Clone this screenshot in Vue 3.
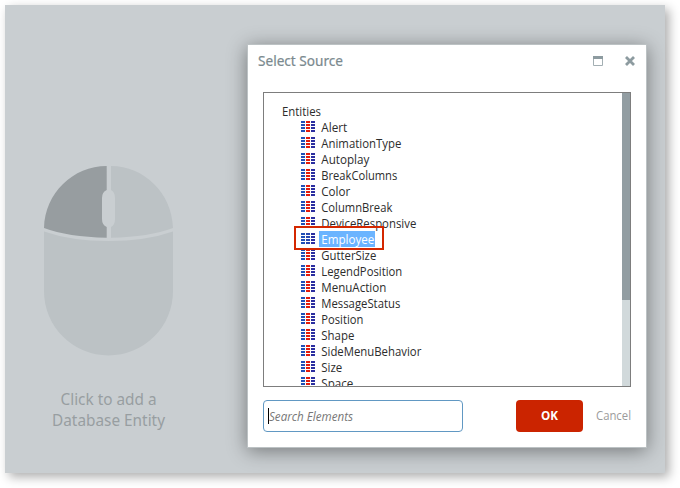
<script setup>
const entities = [
  { name: 'Alert', width: 26 },
  { name: 'AnimationType', width: 80 },
  { name: 'Autoplay', width: 48 },
  { name: 'BreakColumns', width: 76 },
  { name: 'Color', width: 29 },
  { name: 'ColumnBreak', width: 71 },
  { name: 'DeviceResponsive', width: 95 },
  { name: 'Employee', width: 53, selected: true },
  { name: 'GutterSize', width: 55 },
  { name: 'LegendPosition', width: 81 },
  { name: 'MenuAction', width: 65 },
  { name: 'MessageStatus', width: 79 },
  { name: 'Position', width: 42 },
  { name: 'Shape', width: 33 },
  { name: 'SideMenuBehavior', width: 100 },
  { name: 'Size', width: 21 },
  { name: 'Space', width: 32 },
]
</script>

<template>
  <div class="page">
    <main class="canvas">
      <section class="hint">
        <svg class="mouse" width="130" height="190" viewBox="0 0 130 190">
          <path fill="#979da0" d="M0 62C1 27 29 0 62.7 0V24Q58 26 58 32V53Q58 59 62.7 61V71.700Q24 71 0 62Z" />
          <path fill="#bcc2c5" d="M129 62C128 27 100 0 67 0V24Q71 26 71 32V53Q71 59 67 61V71.700Q105 71 129 62Z" />
          <path fill="#bcc2c5" d="M0 65.500Q27 75 64.500 75T129 65.500V125A64.500 64.500 0 0 1 0 125Z" />
        </svg>
        <p class="caption">
          <svg width="126" height="48">
            <text x="16.500" y="16" textLength="96" lengthAdjust="spacingAndGlyphs">Click to add a</text>
            <text x="8" y="37" textLength="113" lengthAdjust="spacingAndGlyphs">Database Entity</text>
          </svg>
        </p>
      </section>
      <section class="dialog">
        <header class="header">
          <svg class="title" width="100" height="22"><text x="0" y="15" textLength="85" lengthAdjust="spacingAndGlyphs">Select Source</text></svg>
          <svg class="tools" width="44" height="12" viewBox="0 0 44 12">
            <path fill="none" stroke="#a3afb3" d="M.5 1v9.500h9V1" />
            <path fill="#8d9ba0" d="M0 1h10v3H0z" />
            <path fill="none" stroke="#8d9ba0" stroke-width="2.800" d="M33 2l8 8M41 2l-8 8" />
          </svg>
        </header>
        <div class="tree">
          <div class="list">
            <div class="root"><svg width="60" height="16"><text x="0" y="13" textLength="39" lengthAdjust="spacingAndGlyphs">Entities</text></svg></div>
            <div v-for="e in entities" :key="e.name" class="row">
              <svg class="grid" width="14" height="11" viewBox="0 0 14 11" shape-rendering="crispEdges">
                <g v-for="n in 4" :key="n">
                  <rect x="0" :y="(n - 1) * 3" width="4" height="2" fill="#2050b8" />
                  <rect x="5" :y="(n - 1) * 3" width="4" height="2" :fill="e.selected ? '#2848b0' : '#e21c0c'" />
                  <rect x="10" :y="(n - 1) * 3" width="4" height="2" fill="#2b2ea0" />
                </g>
              </svg>
              <svg class="name" :class="{ selected: e.selected }" :width="e.width + 3" height="16">
                <text x="2.300" y="13" :textLength="e.width" lengthAdjust="spacingAndGlyphs">{{ e.name }}</text>
              </svg>
              <span v-if="e.selected" class="marker"></span>
            </div>
          </div>
          <div class="track"><div class="thumb"></div></div>
        </div>
        <footer class="footer">
          <div class="search">
            <span class="caret"></span>
            <svg width="100" height="20"><text x="0" y="15" textLength="84" lengthAdjust="spacingAndGlyphs">Search Elements</text></svg>
          </div>
          <button class="ok"><svg width="17" height="16"><text x="0" y="12" textLength="17" lengthAdjust="spacingAndGlyphs">OK</text></svg></button>
          <svg class="cancel" width="35" height="18"><text x="0" y="13" textLength="35" lengthAdjust="spacingAndGlyphs">Cancel</text></svg>
        </footer>
      </section>
    </main>
  </div>
</template>

<style>
body { background: #fff; }
</style>

<style scoped>
* { box-sizing: border-box; }
svg { display: block; flex: none; overflow: visible; }
.page { width: 680px; height: 488px; padding: 5px; overflow: hidden; }
.canvas {
  width: 660px; height: 468px; display: flex; align-items: flex-start;
  background: #c9ced1; box-shadow: 4px 4px 10px rgba(0, 0, 0, .32);
  font-family: "Open Sans", "Noto Sans", sans-serif; font-size: 12px;
}
.hint { width: 242px; padding: 161px 0 0 39px; }
.caption { margin: 33px 0 0; font-family: "Noto Sans", sans-serif; font-size: 16.500px; }
.caption text { fill: #989ea1; }
.dialog {
  width: 400px; height: 404px; margin-top: 39px; padding: 0 15px;
  background: #fff; border: 1px solid #bcc2c4;
  box-shadow: 0 3px 18px rgba(0, 0, 0, .42);
}
.header { height: 47px; padding-top: 6px; display: flex; justify-content: space-between; align-items: flex-start; }
.title { margin-left: -5px; font-family: "Noto Sans", sans-serif; font-size: 13.500px; }
.title text { fill: #7b8a8f; stroke: #7b8a8f; stroke-width: .2px; }
.tools { margin: 4px -6px 0 0; }
.tree { height: 295px; border: 1px solid #7d7d7d; display: flex; }
.list { flex: 1; padding-top: 10px; overflow: hidden; }
.root { height: 16px; padding-left: 18px; }
.row { height: 16px; padding-left: 37px; display: flex; position: relative; }
.list text { fill: #2c2c2c; }
.grid { margin: 2px 4px 0 0; }
.name { height: 16px; }
.list .selected { background: #6bb4ff; }
.list .selected text { fill: #fff; }
.marker { position: absolute; left: 30px; top: -5px; width: 90px; height: 24px; border: 2px solid #d42700; z-index: 1; }
.track { width: 8px; background: #d1d9db; }
.thumb { height: 207px; background: #929da2; }
.footer { margin-top: 13px; display: flex; align-items: center; }
.search { width: 200px; height: 32px; padding-left: 4px; display: flex; align-items: center; border: 1px solid #6198c3; border-radius: 4px; font-style: italic; }
.search text { fill: #777; }
.caret { width: 1px; height: 16px; background: #000; }
.ok { width: 67px; height: 32px; margin-left: 53px; padding: 0; display: flex; align-items: center; justify-content: center; border: 0; border-radius: 4px; background: #cb2400; font: bold 12px "Open Sans", sans-serif; }
.ok text { fill: #fff; }
.cancel { margin-left: 13px; }
.cancel text { fill: #9b9b9b; }
</style>
